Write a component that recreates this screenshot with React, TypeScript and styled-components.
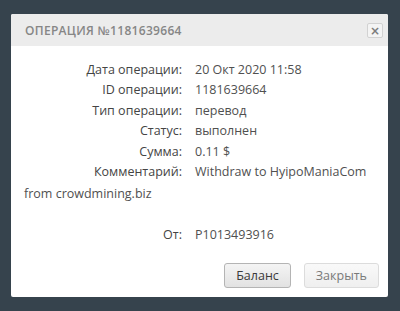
import React from 'react';
import styled, { createGlobalStyle } from 'styled-components';

const GlobalStyle = createGlobalStyle`
  html, body {
    margin: 0;
    padding: 0;
    background: #36434d;
  }
  body {
    font-family: "Open Sans", "Liberation Sans", sans-serif;
  }
`;

const Page = styled.div`
  width: 400px;
  height: 311px;
  padding: 14px 0 0 11px;
  box-sizing: border-box;
  background: #36434d;
  overflow: hidden;
`;

const Dialog = styled.div`
  width: 377px;
  height: 283px;
  background: #fff;
  border-radius: 2px;
  display: flex;
  flex-direction: column;
  overflow: hidden;
`;

const Header = styled.div`
  height: 32px;
  background: #ececec;
  display: flex;
  align-items: center;
  justify-content: space-between;
  padding: 0 5px 0 14px;
`;

const Title = styled.h2`
  margin: 0;
  font-size: 12px;
  font-weight: 600;
  letter-spacing: 0.3px;
  color: #868686;
  text-transform: uppercase;
`;

const CloseButton = styled.button`
  width: 16px;
  height: 15px;
  padding: 0;
  margin-top: 1px;
  border: 1px solid #d2d2d2;
  border-radius: 2px;
  background: #f4f4f4;
  color: #7d7d7d;
  font-size: 12px;
  font-weight: 700;
  line-height: 12px;
  font-family: "DejaVu Sans", sans-serif;
  cursor: pointer;
`;

const Body = styled.div`
  flex: 1;
  padding: 14px 9px 9px 13px;
  display: flex;
  flex-direction: column;
  font-size: 12.5px;
  color: #444;
`;

const Row = styled.div<{ $gap?: number }>`
  line-height: 20.4px;
  margin-top: ${p => p.$gap || 0}px;
`;

const Label = styled.span`
  display: inline-block;
  width: 158px;
  margin-right: 13px;
  text-align: right;
  color: #444;
`;

const Value = styled.span`
  color: #505050;
`;

const Continuation = styled.div`
  line-height: 20.4px;
  margin-top: 2px;
  color: #505050;
`;

const Actions = styled.div`
  margin-top: auto;
  display: flex;
  justify-content: flex-end;
  gap: 13px;
`;

const Button = styled.button<{ $primary?: boolean }>`
  height: 25px;
  padding: 0 11px;
  border-radius: 3px;
  border: 1px solid ${p => (p.$primary ? '#b4b4b4' : '#dcdcdc')};
  background: ${p =>
    p.$primary
      ? 'linear-gradient(#f4f4f4, #e2e2e2)'
      : 'linear-gradient(#f9f9f9, #efefef)'};
  color: ${p => (p.$primary ? '#3a3a3a' : '#7a7a7a')};
  font-family: "Open Sans", "Liberation Sans", sans-serif;
  font-size: 12.5px;
  cursor: pointer;
`;

const rows = [
  ['Дата операции:', '20 Окт 2020 11:58'],
  ['ID операции:', '1181639664'],
  ['Тип операции:', 'перевод'],
  ['Статус:', 'выполнен'],
  ['Сумма:', '0.11 $'],
  ['Комментарий:', 'Withdraw to HyipoManiaCom'],
];

export default function App() {
  return (
    <Page>
      <GlobalStyle />
      <Dialog>
        <Header>
          <Title>Операция №1181639664</Title>
          <CloseButton>×</CloseButton>
        </Header>
        <Body>
          {rows.map(([label, value]) => (
            <Row key={label}>
              <Label>{label}</Label>
              <Value>{value}</Value>
            </Row>
          ))}
          <Continuation>from crowdmining.biz</Continuation>
          <Row $gap={20}>
            <Label>От:</Label>
            <Value>P1013493916</Value>
          </Row>
          <Actions>
            <Button $primary>Баланс</Button>
            <Button>Закрыть</Button>
          </Actions>
        </Body>
      </Dialog>
    </Page>
  );
}
